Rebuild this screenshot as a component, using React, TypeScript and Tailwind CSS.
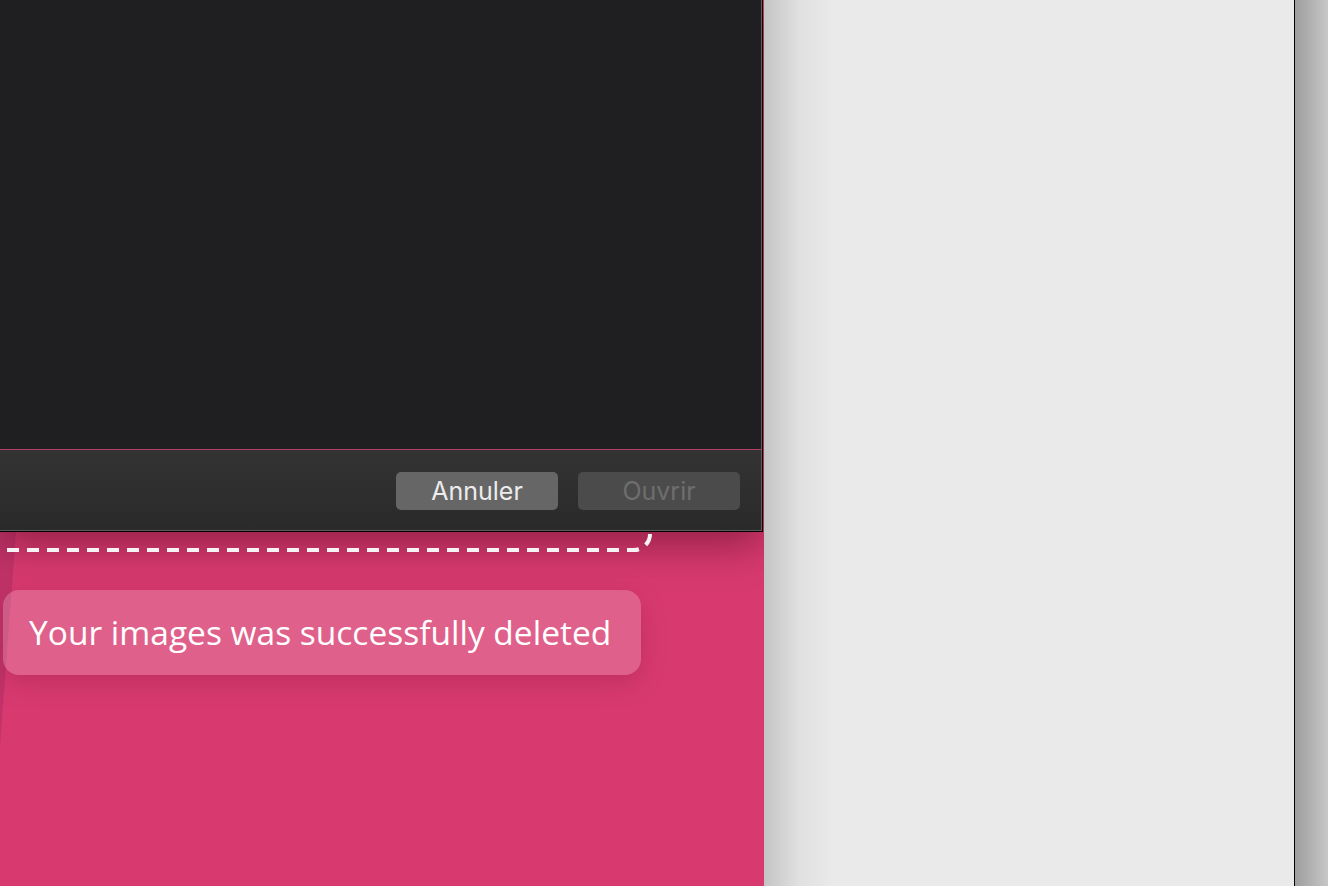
import React from 'react';

const DialogButton: React.FC<{ label: string; disabled?: boolean }> = ({ label, disabled }) => (
    <button
        className={`h-[38px] w-[162px] rounded-[5px] text-[25px] leading-none ${
            disabled ? 'bg-[#4b4b4b] text-[#6e6e6e]' : 'bg-[#666666] text-[#ececec]'
        }`}
        style={{ fontFamily: 'Inter, "Liberation Sans", sans-serif' }}
    >
        {label}
    </button>
);

export default function App() {
    return (
        <div className="flex h-[886px] w-[1328px] overflow-hidden">
            {/* Pink upload page */}
            <div className="relative w-[764px] shrink-0 overflow-hidden bg-[#d83a6f]">
                {/* Slanted edge on the left */}
                <div className="absolute left-0 top-[532px] h-[213px] w-[16px] bg-[#7a1f55]/25 [clip-path:polygon(0_0,100%_0,0_100%)]" />

                {/* Toast */}
                <div
                    className="absolute left-[3px] top-[590px] flex h-[85px] w-[638px] items-center rounded-[16px] bg-white/20 pl-[26px] text-[33.5px] text-white shadow-[0_8px_24px_rgba(120,20,60,0.25)]"
                    style={{ fontFamily: '"Open Sans", sans-serif' }}
                >
                    Your images was successfully deleted
                </div>

                {/* File dialog */}
                <div className="absolute left-0 top-0 flex h-[532px] w-[763px] flex-col border-b border-r border-black shadow-[0_12px_40px_rgba(60,0,20,0.45)]">
                    <div className="flex flex-1 flex-col border-b border-r border-[#5c5c5c]">
                        <div className="flex-1 border-b border-[#b4416c] bg-[#1f1f21]" />
                        <div className="flex h-[80px] items-center justify-end gap-[20px] bg-gradient-to-b from-[#333333] to-[#2a2a2a] pr-[21px] pt-[2px]">
                            <DialogButton label="Annuler" />
                            <DialogButton label="Ouvrir" disabled />
                        </div>
                    </div>
                </div>

                {/* Drop zone outline, the part that shows below the dialog */}
                <svg className="absolute left-0 top-0" width="764" height="600">
                    <path
                        d="M -13 550 H 634 A 16 16 0 0 0 650 534 V 533"
                        fill="none"
                        stroke="#f7f3f5"
                        strokeWidth="4"
                        strokeDasharray="12 8"
                    />
                </svg>
            </div>

            {/* Right panel */}
            <div className="relative w-[530px] shrink-0 bg-[#eaeaea]">
                <div className="absolute inset-y-0 left-0 w-[70px] bg-gradient-to-r from-[#c4c4c4] via-[#e0e0e0] to-[#eaeaea]" />
            </div>
            <div className="w-px shrink-0 bg-black" />
            <div className="flex-1 bg-gradient-to-r from-[#9e9e9e] to-[#c7c7c7]" />
        </div>
    );
}
